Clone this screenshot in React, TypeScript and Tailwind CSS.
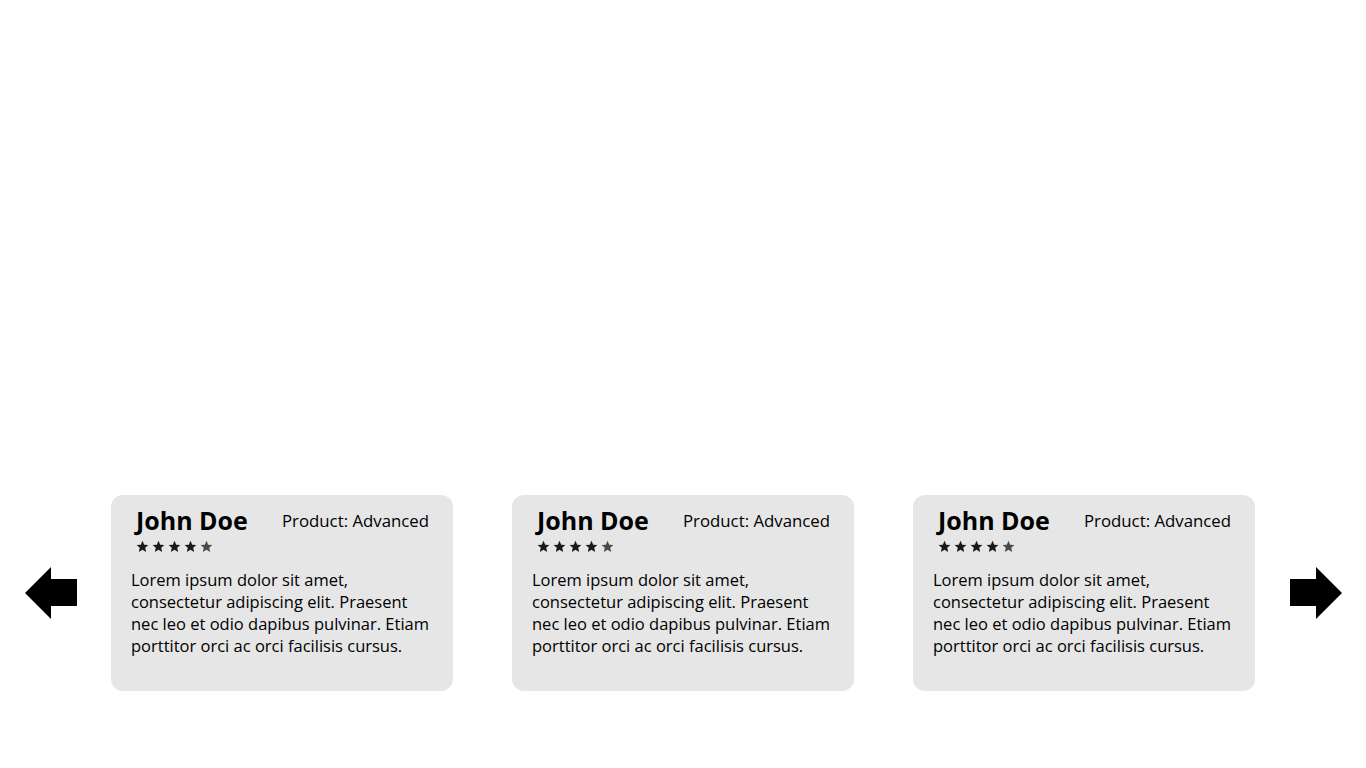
import React from "react";

interface IReview {
  name: string;
  product: string;
  rating: number;
  text: string;
}

const reviews: IReview[] = Array.from({ length: 3 }, () => ({
  name: "John Doe",
  product: "Product: Advanced",
  rating: 4.5,
  text: "Lorem ipsum dolor sit amet, consectetur adipiscing elit. Praesent nec leo et odio dapibus pulvinar. Etiam porttitor orci ac orci facilisis cursus.",
}));

const Star: React.FC<{ color: string }> = ({ color }) => (
  <svg width="13" height="13" viewBox="0 0 24 24" fill={color} className="block">
    <path d="M12 1.5l3.1 7.1 7.7.7-5.8 5.1 1.7 7.6L12 18l-6.7 4 1.7-7.6-5.8-5.1 7.7-.7z" />
  </svg>
);

const Arrow: React.FC<{ dir: "left" | "right"; className?: string }> = ({
  dir,
  className = "",
}) => (
  <button
    aria-label={dir === "left" ? "Previous" : "Next"}
    className={`shrink-0 block ${className}`}
  >
    <svg
      width="52"
      height="52"
      viewBox="0 0 52 52"
      className={`block ${dir === "right" ? "" : "-scale-x-100"}`}
    >
      <path d="M0 12h26V0l26 26-26 26V39H0z" fill="#000" />
    </svg>
  </button>
);

const ReviewCard: React.FC<{ review: IReview }> = ({ review }) => (
  <div className="w-[342px] h-[196px] bg-[#e6e6e6] rounded-[12px] pt-[9px] pl-[20px]">
    <div className="flex items-start justify-between pr-[24px]">
      <div className="pl-[5px]">
        <h3 className="text-[25px] leading-[32px] font-bold text-black">
          {review.name}
        </h3>
        <div className="flex gap-[3px] mt-[4px]">
          {[0, 1, 2, 3].map((i) => (
            <Star key={i} color="#1a1a1a" />
          ))}
          <Star color="#4a4a4a" />
        </div>
      </div>
      <p className="text-[16.8px] leading-[22px] text-black mt-[6px]">
        {review.product}
      </p>
    </div>
    <p className="mt-[16px] pr-[20px] text-[16.5px] leading-[22px] text-black">
      {review.text}
    </p>
  </div>
);

export default function App() {
  return (
    <div
      className="w-full h-[768px] bg-white"
      style={{ fontFamily: '"Open Sans", sans-serif' }}
    >
      <div className="h-[495px]" />
      <div className="flex items-center pl-[25px]">
        <Arrow dir="left" />
        <div className="ml-[34px] flex gap-[59px]">
          {reviews.map((r, i) => (
            <ReviewCard key={i} review={r} />
          ))}
        </div>
        <Arrow dir="right" className="ml-[35px]" />
      </div>
    </div>
  );
}
